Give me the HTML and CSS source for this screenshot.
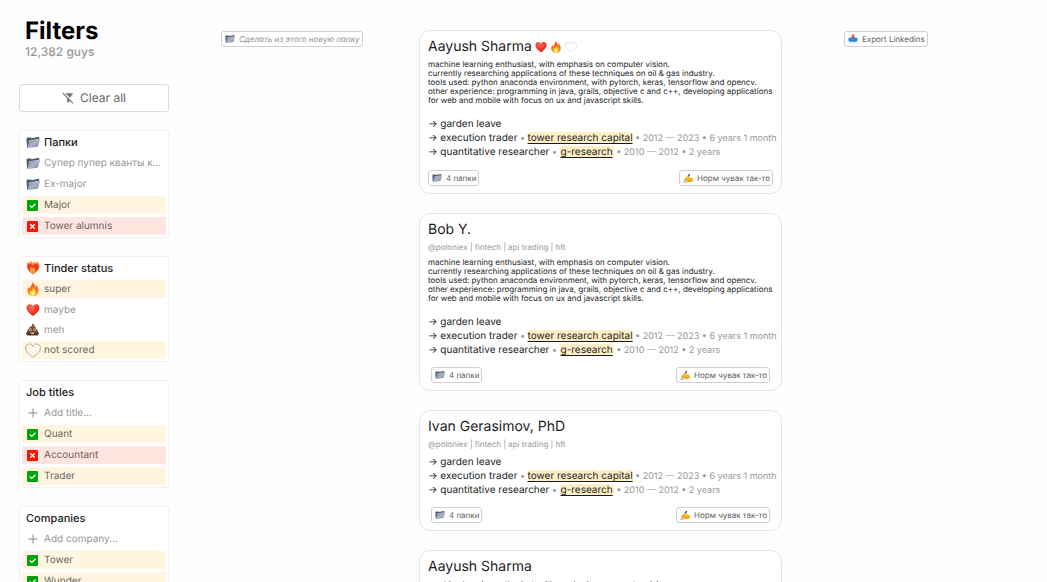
FILE: index.html
```html
<!DOCTYPE html>
<html lang="en">
<head>
<meta charset="utf-8">
<meta name="viewport" content="width=device-width, initial-scale=1">
<title>Filters</title>
<link rel="stylesheet" href="styles.css">
</head>
<body>
<svg class="sprite" width="0" height="0" aria-hidden="true">
  <defs>
    <linearGradient id="gFolder" x1="0" y1="0" x2="1" y2="1"><stop offset="0" stop-color="#77869a"/><stop offset=".5" stop-color="#a9b5c4"/><stop offset="1" stop-color="#74839a"/></linearGradient>
    <radialGradient id="gHeart" cx=".4" cy=".25" r=".8"><stop offset="0" stop-color="#ff6d5a"/><stop offset=".55" stop-color="#f43b2c"/><stop offset="1" stop-color="#d3201b"/></radialGradient>
    <linearGradient id="gFire" x1="0" y1="0" x2="0" y2="1"><stop offset="0" stop-color="#f4511e"/><stop offset=".6" stop-color="#fb7a1c"/><stop offset="1" stop-color="#ffa726"/></linearGradient>
    <linearGradient id="gPoo" x1="0" y1="0" x2="0" y2="1"><stop offset="0" stop-color="#8a5a3c"/><stop offset="1" stop-color="#5d3420"/></linearGradient>
    <linearGradient id="gHand" x1="0" y1="0" x2="0" y2="1"><stop offset="0" stop-color="#ffd23b"/><stop offset="1" stop-color="#f39a13"/></linearGradient>
  </defs>
  <symbol id="folder" viewBox="0 0 28 26">
    <path d="M1 5.500 2.500 3h7L11 4.500 25 1.500 26.500 3v6L4 24 2 22z" fill="#4d5b6c"/>
    <path d="M6 9 25 5.500V9L5 13z" fill="#c9d2dc"/>
    <path d="M8 9.500 27 7Q28 7 27.700 8L24 20.500Q23.700 21.500 22.500 21.700L4 24Q2.800 24 3 22.800L6.500 11Q6.900 9.700 8 9.500z" fill="url(#gFolder)"/>
  </symbol>
  <symbol id="heart" viewBox="0 0 28 26">
    <path d="M14 25C9 21.500 1 16 1 8.700 1 4.300 4.200 1.500 7.800 1.500c2.800 0 5 1.500 6.200 4 1.200-2.500 3.400-4 6.200-4C23.800 1.500 27 4.300 27 8.700 27 16 19 21.500 14 25z" fill="url(#gHeart)"/>
  </symbol>
  <symbol id="heart-line" viewBox="0 0 28 26">
    <path d="M14 24.500C9 21 1 16 1 8.700 1 4.500 4 1.500 7.600 1.500c2.900 0 5.200 1.700 6.400 4.500 1.200-2.800 3.500-4.500 6.400-4.500C24 1.500 27 4.500 27 8.700 27 16 19 21 14 24.500z" fill="#fff" fill-opacity=".4" stroke="currentColor" stroke-width="1.500"/>
  </symbol>
  <symbol id="fire" viewBox="0 0 26 30">
    <path d="M12 0c2 4 6 6 6.500 11 1-1 1.500-2.500 1.300-4.500C23 10 25 14 25 18.500 25 25 20 30 13 30S1 25.500 1 19c0-4 1.500-6.500 3.500-9 .2 2 .8 3.500 2 4.500C6.500 9 12 6 12 0z" fill="url(#gFire)"/>
    <path d="M13.500 11c.5 4 5.500 5.500 6 11 .2 4-2.500 7-6.500 7s-7-3-6.700-6.500c.2-2.500 1.700-4 2.700-5.500.3 1.500.8 2.300 1.700 2.800 0-3.500 2.800-5 2.800-8.800z" fill="#ffd43b"/>
    <path d="M13.500 19c.3 2 3 3.500 3 6 0 2.400-1.500 4-3.500 4s-3.500-1.600-3.500-3.800c0-2.500 3.500-3.700 4-6.200z" fill="#fff3a8"/>
  </symbol>
  <symbol id="heart-fire" viewBox="0 0 28 28">
    <path d="M2 10C1 6 3 4 4.500 1.500 5 3 6 4 7 4.500 8 3 8.500 2 8 0c3 1 4.500 3 5.500 5C15 4 16 2.500 16 .5c2 1 3 2.500 3.500 4 1.500-.8 2-2 2-3.500C25 3 27 6 27 10c0 8-8 13.500-13 17C9 24 3 18 2 10z" fill="#fb8b24"/>
    <path d="M14 26C9.500 22.500 2.500 18 2.500 11.500 2.500 8 5 6 8 6c2.500 0 4.700 1.300 6 3.500C15.300 7.300 17.500 6 20 6c3 0 5.500 2 5.500 5.500C25.500 18 18.500 22.500 14 26z" fill="#ee3524"/>
    <path d="M8 19c-1-4 1.500-5.500 2-8 2 1.500 2.500 3 2.500 4.500 1.500-1 2-2.500 2-4 3 2 4.500 5 3.500 8 1-.5 1.500-1.500 1.700-2.500 1 3-2.200 5.500-5.700 8.500-2.500-1.500-5-3.500-6-6.500z" fill="#ffa12e"/>
  </symbol>
  <symbol id="poo" viewBox="0 0 28 28">
    <path d="M13 1c4 1 6.500 3.500 5.500 7 2.500.5 4 2.500 3.500 5.500 2.500.5 4 3 3 5.500 2 .7 3 2.500 2.500 4.500-.6 2.500-3 3.500-6 3.500H6.500c-3 0-5.400-1-6-3.500C0 21.500 1 19.700 3 19c-.7-3 .5-5 3-5.500-.3-3 1-5 3.500-5.500C13 7.300 14.500 4.500 13 1z" fill="url(#gPoo)"/>
    <circle cx="9.800" cy="15" r="3" fill="#e8e4e0"/><circle cx="18.200" cy="15" r="3" fill="#e8e4e0"/>
    <circle cx="10.300" cy="15.200" r="1.700" fill="#222"/><circle cx="17.700" cy="15.200" r="1.700" fill="#222"/>
    <path d="M9.500 20.500h9c-.8 2-2.500 3-4.500 3s-3.700-1-4.500-3z" fill="#e8e4e0"/>
  </symbol>
  <symbol id="check" viewBox="0 0 22 22">
    <rect width="22" height="22" rx="2" fill="#00a30b"/>
    <path d="m5.500 11 4 4 7.500-7.500" fill="none" stroke="#fff" stroke-width="2.400"/>
  </symbol>
  <symbol id="cross" viewBox="0 0 22 22">
    <rect width="22" height="22" rx="2" fill="#fc1303"/>
    <path d="m6.500 6.500 9 9m0-9-9 9" fill="none" stroke="#fff" stroke-width="2.800"/>
  </symbol>
  <symbol id="plus" viewBox="0 0 20 20">
    <path d="M10 1v18M1 10h18" fill="none" stroke="#8c8c8c" stroke-width="2"/>
  </symbol>
  <symbol id="filter-off" viewBox="1 2 21 21">
    <path d="M19.790 5.610C20.300 4.950 19.830 4 19 4H6.830l7.970 7.970 4.990-6.360zM2.810 2.810 1.390 4.220 10 13v6c0 .55.450 1 1 1h2c.55 0 1-.45 1-1v-2.170l5.780 5.780 1.410-1.410L2.810 2.810z" fill="#777"/>
  </symbol>
  <symbol id="hand" viewBox="0 0 28 26">
    <path d="M4 19 17 2l3-.5-.5 3L8 20z" fill="#454a55"/>
    <path d="M3 21.500 5 17l3 3z" fill="#e7a93b"/>
    <path d="M5 14.500 12 7c1.500-1.500 3.500-.5 3 1l-1.500 3.500L19 10c3-.5 8 3 9 5.500v6L22 24c-4 1-9 .5-11-.5-1.500-.8-1-2 0-2.300-2-.4-2.500-2-1-3l-3.500-.7c-2-.5-2.500-2-1.500-3z" fill="url(#gHand)"/>
    <path d="M1 24.500h9" stroke="#333" stroke-width="1.500"/>
  </symbol>
  <symbol id="outbox" viewBox="0 0 28 28">
    <path d="M1 17h26v9.500H1z" fill="#eceff2"/>
    <path d="M1 12h7l2.500 3h7L20 12h7v6q-2 0-3 2t-3 2H7q-2 0-3-2t-3-2z" fill="#2586de"/>
    <path d="M2 12h6l2.500 3h7L20 12h6l-3-2H5z" fill="#1762b5"/>
    <path d="M14 0 20 6.500h-3.500V12h-5V6.500H8z" fill="#f14d39"/>
  </symbol>
</svg>

<div class="page">
  <aside class="sidebar">
    <header class="heading">
      <h1 class="heading-title">Filters</h1>
      <p class="heading-count">12,382 guys</p>
    </header>
    <button class="clear" type="button"><svg class="clear-icon"><use href="#filter-off"/></svg>Clear all</button>

    <section class="panel">
      <h2 class="row title"><span class="slot"><svg class="i-folder"><use href="#folder"/></svg></span>Папки</h2>
      <button class="row" type="button"><span class="slot"><svg class="i-folder"><use href="#folder"/></svg></span><span class="label">Супер пупер кванты компании</span></button>
      <button class="row" type="button"><span class="slot"><svg class="i-folder"><use href="#folder"/></svg></span>Ex-major</button>
      <label class="row on"><span class="slot"><input class="tick" type="checkbox" checked><svg class="i-box"><use href="#check"/></svg></span>Major</label>
      <label class="row off"><span class="slot"><input class="tick" type="checkbox" checked><svg class="i-box"><use href="#cross"/></svg></span>Tower alumnis</label>
    </section>

    <section class="panel">
      <h2 class="row title"><span class="slot"><svg class="i-emoji"><use href="#heart-fire"/></svg></span>Tinder status</h2>
      <button class="row on" type="button"><span class="slot"><svg class="i-emoji"><use href="#fire"/></svg></span>super</button>
      <button class="row short" type="button"><span class="slot"><svg class="i-emoji"><use href="#heart"/></svg></span>maybe</button>
      <button class="row short" type="button"><span class="slot"><svg class="i-poo"><use href="#poo"/></svg></span>meh</button>
      <button class="row on" type="button"><span class="slot"><svg class="i-line"><use href="#heart-line"/></svg></span>not scored</button>
    </section>

    <section class="panel">
      <h2 class="row title">Job titles</h2>
      <label class="row"><span class="slot"><svg class="i-plus"><use href="#plus"/></svg></span><input class="add" type="text" placeholder="Add title..." aria-label="Add title"></label>
      <label class="row on"><span class="slot"><input class="tick" type="checkbox" checked><svg class="i-box"><use href="#check"/></svg></span>Quant</label>
      <label class="row off"><span class="slot"><input class="tick" type="checkbox" checked><svg class="i-box"><use href="#cross"/></svg></span>Accountant</label>
      <label class="row on"><span class="slot"><input class="tick" type="checkbox" checked><svg class="i-box"><use href="#check"/></svg></span>Trader</label>
    </section>

    <section class="panel">
      <h2 class="row title">Companies</h2>
      <label class="row"><span class="slot"><svg class="i-plus"><use href="#plus"/></svg></span><input class="add" type="text" placeholder="Add company..." aria-label="Add company"></label>
      <label class="row on"><span class="slot"><input class="tick" type="checkbox" checked><svg class="i-box"><use href="#check"/></svg></span>Tower</label>
      <label class="row on"><span class="slot"><input class="tick" type="checkbox" checked><svg class="i-box"><use href="#check"/></svg></span>Wunder</label>
    </section>
  </aside>

  <div class="action action-folder">
    <button class="chip chip-draft" type="button"><svg class="chip-icon"><use href="#folder"/></svg>Сделать из этого новую папку</button>
  </div>

  <main class="feed">
    <article class="card">
      <h3 class="name">Aayush Sharma <span class="marks"><svg class="mark"><use href="#heart"/></svg><svg class="mark"><use href="#fire"/></svg><svg class="mark mark-line"><use href="#heart-line"/></svg></span></h3>
      <p class="bio">machine learning enthusiast, with emphasis on computer vision.<br>currently researching applications of these techniques on oil &amp; gas industry.<br>tools used: python anaconda environment, with pytorch, keras, tensorflow and opencv.<br>other experience: programming in java, grails, objective c and c++, developing applications<br>for web and mobile with focus on ux and javascript skills.</p>
      <ul class="jobs">
        <li>→ garden leave</li>
        <li>→ execution trader<span class="muted"> • </span><a class="firm" href="#">tower research capital</a><span class="muted"> • 2012 — 2023 • 6 years 1 month</span></li>
        <li>→ quantitative researcher<span class="muted"> • </span><a class="firm firm-wide" href="#">g-research</a><span class="muted"> • 2010 — 2012 • 2 years</span></li>
      </ul>
      <footer class="foot">
        <button class="chip" type="button"><svg class="chip-icon"><use href="#folder"/></svg>4 папки</button>
        <button class="chip" type="button"><svg class="chip-icon"><use href="#hand"/></svg>Норм чувак так-то</button>
      </footer>
    </article>

    <article class="card">
      <h3 class="name">Bob Y.</h3>
      <p class="tags">@poloniex | fintech | api trading | hft</p>
      <p class="bio">machine learning enthusiast, with emphasis on computer vision.<br>currently researching applications of these techniques on oil &amp; gas industry.<br>tools used: python anaconda environment, with pytorch, keras, tensorflow and opencv.<br>other experience: programming in java, grails, objective c and c++, developing applications<br>for web and mobile with focus on ux and javascript skills.</p>
      <ul class="jobs">
        <li>→ garden leave</li>
        <li>→ execution trader<span class="muted"> • </span><a class="firm" href="#">tower research capital</a><span class="muted"> • 2012 — 2023 • 6 years 1 month</span></li>
        <li>→ quantitative researcher<span class="muted"> • </span><a class="firm firm-wide" href="#">g-research</a><span class="muted"> • 2010 — 2012 • 2 years</span></li>
      </ul>
      <footer class="foot foot-inset">
        <button class="chip" type="button"><svg class="chip-icon"><use href="#folder"/></svg>4 папки</button>
        <button class="chip" type="button"><svg class="chip-icon"><use href="#hand"/></svg>Норм чувак так-то</button>
      </footer>
    </article>

    <article class="card">
      <h3 class="name">Ivan Gerasimov, PhD</h3>
      <p class="tags">@poloniex | fintech | api trading | hft</p>
      <ul class="jobs">
        <li>→ garden leave</li>
        <li>→ execution trader<span class="muted"> • </span><a class="firm" href="#">tower research capital</a><span class="muted"> • 2012 — 2023 • 6 years 1 month</span></li>
        <li>→ quantitative researcher<span class="muted"> • </span><a class="firm firm-wide" href="#">g-research</a><span class="muted"> • 2010 — 2012 • 2 years</span></li>
      </ul>
      <footer class="foot foot-inset">
        <button class="chip" type="button"><svg class="chip-icon"><use href="#folder"/></svg>4 папки</button>
        <button class="chip" type="button"><svg class="chip-icon"><use href="#hand"/></svg>Норм чувак так-то</button>
      </footer>
    </article>

    <article class="card">
      <h3 class="name">Aayush Sharma</h3>
      <p class="bio">machine learning enthusiast, with emphasis on computer vision.<br>currently researching applications of these techniques on oil &amp; gas industry.</p>
    </article>
  </main>

  <div class="action action-export">
    <button class="chip" type="button"><svg class="chip-icon"><use href="#outbox"/></svg>Export Linkedins</button>
  </div>
</div>
</body>
</html>
```
FILE: styles.css
```css
* { box-sizing: border-box; }

body {
  margin: 0;
  height: 100vh;
  overflow: hidden;
  background: #fefefe;
  color: #1c1c1e;
  font: 10px/14px Inter, "Noto Sans", sans-serif;
  text-rendering: geometricPrecision;
}

h1, h2, h3, p, ul { margin: 0; padding: 0; font-weight: 400; }
ul { list-style: none; }
button, input { font: inherit; color: inherit; text-rendering: inherit; }
svg { display: block; flex: none; }
.sprite { position: absolute; }

.page {
  display: grid;
  grid-template-columns: minmax(0, 150fr) minmax(0, 250fr) minmax(0, 363fr) minmax(0, 250fr);
  align-items: start;
  padding: 0 15px 0 19px;
}

/* Sidebar */
.sidebar {
  display: flex;
  flex-direction: column;
  gap: 18px;
  padding-top: 17px;
}
.heading { padding: 0 0 7px 6px; }
.heading-title { font-size: 24px; line-height: 28px; font-weight: 700; color: #000; }
.heading-count { font-size: 12px; line-height: 14px; font-weight: 500; color: #999; }

.clear {
  display: flex;
  align-items: center;
  justify-content: center;
  gap: 6px;
  height: 28px;
  padding: 0;
  border: 1px solid #dcdcdc;
  border-radius: 3px;
  background: #fff;
  color: #666;
  font-size: 12px;
}
.clear-icon { width: 12px; height: 12px; }

.panel {
  display: flex;
  flex-direction: column;
  gap: 3px;
  padding: 2px;
  border: 1px solid #f0f0f2;
  border-radius: 3px;
  background: #fff;
}
.row {
  display: flex;
  align-items: center;
  gap: 4px;
  height: 18px;
  padding: 0 3px;
  border: 0;
  border-radius: 2px;
  background: none;
  color: #97979a;
  text-align: left;
}
.short { height: 17px; }
.title { padding-left: 4px; font-size: 11px; font-weight: 500; color: #1c1c1e; }
.title .slot { margin-left: -1px; }
.on { background: #fff5e1; color: #6b6760; }
.off { background: #ffe5e0; color: #6b6360; }
.label { min-width: 0; overflow: hidden; white-space: nowrap; text-overflow: ellipsis; }

.slot { display: grid; justify-content: center; align-items: center; flex: none; width: 15px; }
.slot > * { grid-area: 1 / 1; }
.tick { appearance: none; width: 11px; height: 11px; margin: 0; }
.i-box { width: 11px; height: 11px; pointer-events: none; }
.i-folder { width: 14px; height: 13px; }
.i-emoji { width: 14px; height: 14px; }
.i-poo { width: 13px; height: 13px; }
.i-line { width: 16px; height: 15px; color: #a9a294; }
.i-plus { width: 10px; height: 10px; }

.add { width: 100%; min-width: 0; padding: 0; border: 0; outline: 0; background: none; }
.add::placeholder { color: #97979a; opacity: 1; }

/* Page actions */
.action { padding-top: 31px; }
.action-folder { padding-left: 52px; }
.action-export { padding-left: 62px; }

.chip {
  display: flex;
  align-items: center;
  gap: 4px;
  height: 16px;
  padding: 0 2px 0 3px;
  border: 1px solid #d0d0d2;
  border-radius: 3px;
  background: #fff;
  color: #5c5c60;
  font-size: 8px;
  line-height: 10px;
  white-space: nowrap;
}
.chip-draft { color: #909094; font-style: italic; }
.chip-icon { width: 10px; height: 10px; }

/* Candidate cards */
.feed {
  display: flex;
  flex-direction: column;
  gap: 19px;
  padding-top: 30px;
}
.card {
  padding: 7px 8px;
  border: 1px solid #e6e6e8;
  border-radius: 11px;
  background: #fff;
}
.name { display: flex; align-items: center; gap: 3px; font-size: 14px; line-height: 18px; }
.marks { display: flex; gap: 3px; }
.mark { width: 12px; height: 12px; }
.mark-line { color: #d4d4d6; }
.tags { margin-top: 4px; font-size: 8px; line-height: 9px; color: #97979a; }
.bio { margin-top: 4px; font-size: 8px; line-height: 9px; white-space: nowrap; }
.tags + .bio, .tags + .jobs { margin-top: 6px; }
.jobs { margin-top: 12px; white-space: nowrap; }
.muted { color: #97979a; font-size: 9px; line-height: 10px; }
.firm { border-radius: 2px; background: #ffefc8; color: inherit; text-underline-offset: 2px; }
.firm-wide { padding: 0 1px; }
.foot { display: flex; justify-content: space-between; margin-top: 11px; }
.foot-inset { margin-top: 10px; padding: 0 3px; }
```
